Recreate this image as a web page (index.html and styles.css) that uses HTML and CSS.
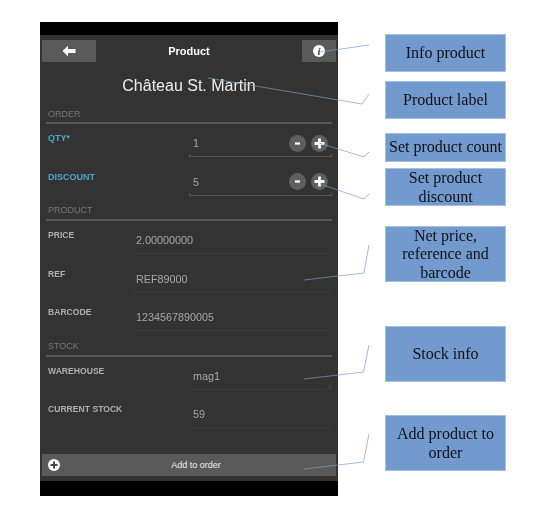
FILE: index.html
```html
<!DOCTYPE html>
<html lang="en">
<head>
    <meta charset="UTF-8">
    <meta name="viewport" content="width=device-width, initial-scale=1.0">
    <title>Product</title>
    <link rel="stylesheet" href="styles.css">
</head>
<body>
    <div class="stage">
        <div class="phone">
            <div class="band-top"></div>
            <div class="header">
                <div class="head-btn back">
                    <svg width="14" height="12" viewBox="0 0 14 12"><path d="M0.5 6 L6 0.8 L6 3.9 L13.5 3.9 L13.5 8.1 L6 8.1 L6 11.2 Z" fill="#fff"/></svg>
                </div>
                <div class="head-title">Product</div>
                <div class="head-btn info">
                    <span class="info-icon">i</span>
                </div>
            </div>
            <div class="product-name">Château St. Martin</div>

            <div class="section-title first">ORDER</div>
            <div class="row order-row">
                <div class="label blue">QTY*</div>
                <div class="field ticked">
                    <span>1</span>
                    <div class="stepper">
                        <div class="round"><svg width="9" height="9" viewBox="0 0 9 9"><rect x="2" y="3.4" width="5" height="2.2" fill="#fff"/></svg></div>
                        <div class="round"><svg width="11" height="11" viewBox="0 0 11 11"><path d="M4.1 0.5 H6.9 V4.1 H10.5 V6.9 H6.9 V10.5 H4.1 V6.9 H0.5 V4.1 H4.1 Z" fill="#fff"/></svg></div>
                    </div>
                </div>
            </div>
            <div class="row order-row">
                <div class="label blue">DISCOUNT</div>
                <div class="field ticked">
                    <span>5</span>
                    <div class="stepper">
                        <div class="round"><svg width="9" height="9" viewBox="0 0 9 9"><rect x="2" y="3.4" width="5" height="2.2" fill="#fff"/></svg></div>
                        <div class="round"><svg width="11" height="11" viewBox="0 0 11 11"><path d="M4.1 0.5 H6.9 V4.1 H10.5 V6.9 H6.9 V10.5 H4.1 V6.9 H0.5 V4.1 H4.1 Z" fill="#fff"/></svg></div>
                    </div>
                </div>
            </div>

            <div class="section-title">PRODUCT</div>
            <div class="row product-row">
                <div class="label">PRICE</div>
                <div class="field"><span>2.00000000</span></div>
            </div>
            <div class="row product-row">
                <div class="label">REF</div>
                <div class="field"><span>REF89000</span></div>
            </div>
            <div class="row product-row">
                <div class="label">BARCODE</div>
                <div class="field"><span>1234567890005</span></div>
            </div>

            <div class="section-title">STOCK</div>
            <div class="row order-row">
                <div class="label">WAREHOUSE</div>
                <div class="field grip"><span>mag1</span></div>
            </div>
            <div class="row order-row">
                <div class="label">CURRENT STOCK</div>
                <div class="field"><span>59</span></div>
            </div>

            <div class="footer">
                <div class="add-btn">
                    <svg class="add-icon" width="12" height="12" viewBox="0 0 12 12"><circle cx="6" cy="6" r="6" fill="#fff"/><path d="M5 2.5 H7 V5 H9.5 V7 H7 V9.5 H5 V7 H2.5 V5 H5 Z" fill="#444"/></svg>
                    <span>Add to order</span>
                </div>
            </div>
            <div class="band-bottom"></div>
        </div>

        <div class="notes">
            <div class="note n-info">Info product</div>
            <div class="note n-label">Product label</div>
            <div class="note n-count">Set product count</div>
            <div class="note n-discount">Set product discount</div>
            <div class="note n-net">Net price, reference and barcode</div>
            <div class="note n-stock">Stock info</div>
            <div class="note n-add">Add product to order</div>
        </div>

        <svg class="leaders" width="550" height="516" viewBox="0 0 550 516">
            <polyline points="320,52 369,45"/>
            <polyline points="208,78 362,104 369,94"/>
            <polyline points="319,143 364,157 369,152"/>
            <polyline points="320,184 364,199 369,194"/>
            <polyline points="304,280 364,273 369,245"/>
            <polyline points="304,379 363.5,372 369,345"/>
            <polyline points="304,469 363.5,462 369,434"/>
        </svg>
    </div>
</body>
</html>
```

FILE: styles.css
```css
body {
    margin: 0;
    background-color: #fff;
    font-family: "Liberation Sans", Arial, sans-serif;
}

.stage {
    position: relative;
    display: flex;
    width: 550px;
    height: 516px;
    overflow: hidden;
    filter: blur(0.35px);
}

.phone {
    display: flex;
    flex-direction: column;
    width: 298px;
    height: 474px;
    margin: 22px 0 0 40px;
    background-color: #333;
}

.band-top {
    height: 13px;
    background-color: #000;
}

.band-bottom {
    height: 15px;
    background-color: #000;
}

.header {
    display: flex;
    align-items: center;
    height: 22px;
    padding: 5px 2px 0;
}

.head-btn {
    display: flex;
    align-items: center;
    justify-content: center;
    height: 22px;
    background-color: #5a5a5a;
}

.back {
    width: 54px;
}

.info {
    width: 34px;
}

.info-icon {
    width: 12px;
    height: 12px;
    border-radius: 50%;
    background-color: #fff;
    color: #444;
    font: italic bold 11px/12px "Liberation Serif", serif;
    text-align: center;
}

.head-title {
    flex: 1;
    padding-right: 20px;
    color: #fff;
    font-size: 11px;
    font-weight: bold;
    text-align: center;
}

.product-name {
    margin-top: 14px;
    height: 20px;
    color: #eee;
    font-size: 16px;
    line-height: 20px;
    text-align: center;
}

.section-title {
    height: 18px;
    margin: 0 6px;
    padding-left: 2px;
    border-bottom: 2px solid #585858;
    color: #777;
    font-size: 9px;
    line-height: 18px;
}

.section-title.first {
    margin-top: 8.3px;
    line-height: 20px;
}

.row {
    display: grid;
    height: 38.5px;
    margin: 0 6px;
}

.order-row {
    grid-template-columns: 143px 1fr;
}

.product-row {
    grid-template-columns: 86px 1fr;
}

.label {
    padding: 9px 0 0 2px;
    color: #b0b0b0;
    font-size: 8.6px;
    font-weight: bold;
    line-height: 10px;
}

.label.blue {
    color: #4ba6cc;
    font-size: 9px;
}

.field {
    position: relative;
    display: flex;
    align-items: center;
    justify-content: space-between;
    height: 20px;
    margin-top: 9px;
    padding: 0 0 3px 4px;
    border-bottom: 1px solid #3c3c3c;
    color: #a8a8a8;
    font-size: 10.8px;
}

.field.ticked {
    border-bottom-color: #585858;
}

.field.ticked::after {
    content: "";
    position: absolute;
    left: 0;
    right: 0;
    bottom: 0;
    height: 2px;
    border-left: 1px solid #585858;
    border-right: 1px solid #585858;
}

.field.grip::after {
    content: "";
    position: absolute;
    right: 1px;
    bottom: 1px;
    border-left: 4px solid transparent;
    border-bottom: 4px solid #444;
}

.stepper {
    display: flex;
    gap: 5px;
    margin-right: 4px;
}

.round {
    display: flex;
    align-items: center;
    justify-content: center;
    width: 17px;
    height: 17px;
    border-radius: 50%;
    background-color: #5f5f5f;
}

.footer {
    flex: 1;
    display: flex;
    align-items: flex-end;
    padding: 0 2px 5px;
}

.add-btn {
    position: relative;
    display: flex;
    align-items: center;
    justify-content: center;
    box-sizing: border-box;
    width: 100%;
    height: 22px;
    padding-left: 14px;
    background-color: #5a5a5a;
    color: #eee;
    font-size: 9px;
}

.add-icon {
    position: absolute;
    left: 6px;
    top: 5px;
}

.notes {
    display: flex;
    flex-direction: column;
    width: 121px;
    margin-left: 47px;
    padding-top: 34px;
}

.note {
    display: flex;
    align-items: center;
    justify-content: center;
    box-sizing: border-box;
    padding: 1px 3px 0;
    background-color: #729acf;
    border: 1px solid #a3bfe3;
    color: #111;
    font-family: "Liberation Serif", serif;
    font-size: 16px;
    line-height: 18.5px;
    text-align: center;
}

.n-info { height: 38px; }
.n-label { height: 38px; margin-top: 9px; }
.n-count { height: 29px; margin-top: 14px; padding: 0; white-space: nowrap; }
.n-discount { height: 38px; margin-top: 6px; }
.n-net { height: 56px; margin-top: 20px; }
.n-stock { height: 56px; margin-top: 44px; }
.n-add { height: 56px; margin-top: 33px; }

.leaders {
    position: absolute;
    left: 0;
    top: 0;
    pointer-events: none;
}

.leaders polyline {
    fill: none;
    stroke: #7c9ccb;
    stroke-width: 0.7;
}
```
